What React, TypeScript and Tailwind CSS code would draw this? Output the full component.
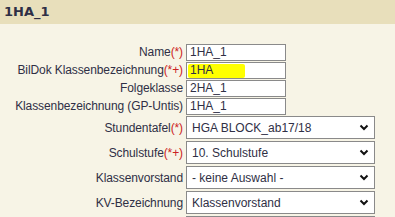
import React from 'react';

const labelFont = { fontFamily: '"Liberation Sans", Arial, sans-serif' };

function Label({ text, req }: { text: string; req?: string }) {
  return (
    <span className="w-[183px] shrink-0 text-right text-[12px] tracking-[-0.1px] text-[#2f2f45] whitespace-nowrap">
      {text}
      {req && <span className="text-[#cc2222]">{req}</span>}
    </span>
  );
}

function TextRow({ label, req, value, marked }: { label: string; req?: string; value: string; marked?: boolean }) {
  return (
    <div className="flex items-center h-[18px]">
      <Label text={label} req={req} />
      <div className="relative ml-[3px] w-[100px] h-[17px] bg-white border border-[#8a8a8a] text-[12px] text-[#2f2f45] leading-[15px] pl-[3px]">
        {marked && <div className="absolute left-[1px] top-[1px] w-[57px] h-[14px] bg-[#ffff00] rounded-[2px]" />}
        <span className="relative">{value}</span>
      </div>
    </div>
  );
}

function SelectRow({ label, req, value }: { label: string; req?: string; value: string }) {
  return (
    <div className="flex items-center h-[25px]">
      <Label text={label} req={req} />
      <div className="flex items-center justify-between ml-[3px] w-[189px] h-[23px] bg-white border border-[#8a8a8a] text-[12px] text-[#2f2f45] pl-[5px] pr-[5px]">
        <span>{value}</span>
        <svg width="10" height="7" viewBox="0 0 10 7">
          <path d="M1.5 1.5 L5 5 L8.5 1.5" fill="none" stroke="#111" strokeWidth="2" />
        </svg>
      </div>
    </div>
  );
}

export default function App() {
  return (
    <div className="w-[395px] h-[217px] overflow-hidden bg-[#f7f4e6]" style={labelFont}>
      <div className="h-[24px] bg-[#e8dfbb] flex items-center pl-[4px]">
        <span className="text-[13px] font-bold text-[#2f2f45]" style={{ fontFamily: 'Verdana, "DejaVu Sans", sans-serif' }}>
          1HA_1
        </span>
      </div>
      <div className="pt-[19px] flex flex-col">
        <TextRow label="Name" req="(*)" value="1HA_1" />
        <TextRow label="BilDok Klassenbezeichnung" req="(*+)" value="1HA" marked />
        <TextRow label="Folgeklasse" value="2HA_1" />
        <TextRow label="Klassenbezeichnung (GP-Untis)" value="1HA_1" />
        <SelectRow label="Stundentafel" req="(*)" value="HGA BLOCK_ab17/18" />
        <SelectRow label="Schulstufe" req="(*+)" value="10. Schulstufe" />
        <SelectRow label="Klassenvorstand" value="- keine Auswahl -" />
        <SelectRow label="KV-Bezeichnung" value="Klassenvorstand" />
        <SelectRow label="" value="" />
      </div>
    </div>
  );
}
